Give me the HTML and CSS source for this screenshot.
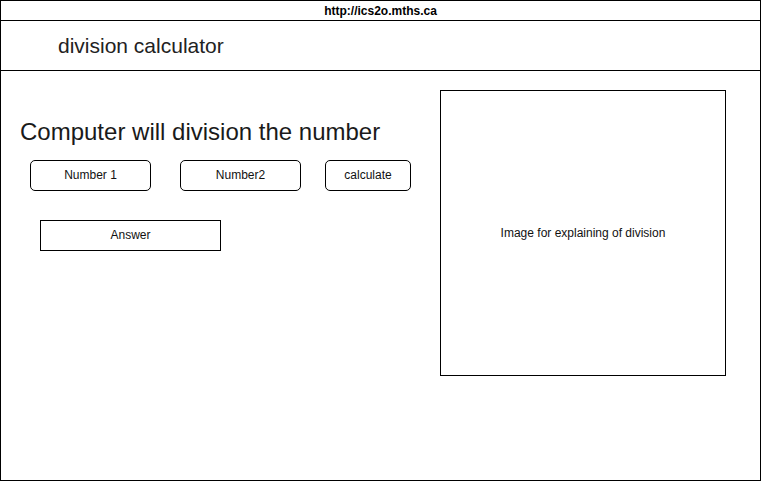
FILE: index.html
```html
<!DOCTYPE html>
<html>
<head>
<meta charset="utf-8">
<link rel="stylesheet" href="styles.css">
</head>
<body>
<div class="frame">
  <div class="urlbar">http://ics2o.mths.ca</div>
  <div class="header">division calculator</div>
  <div class="main">
    <div class="left">
      <h1 class="title">Computer will division the number</h1>
      <div class="controls">
        <div class="field field-wide field-first">Number 1</div>
        <div class="field field-wide">Number2</div>
        <div class="field field-calc">calculate</div>
      </div>
      <div class="answer">Answer</div>
    </div>
    <div class="picture">Image for explaining of division</div>
  </div>
</div>
</body>
</html>
```

FILE: styles.css
```css
* { box-sizing: border-box; }
html, body {
  margin: 0;
  padding: 0;
  background: #fff;
}
body {
  font-family: "Liberation Sans", Arial, sans-serif;
  color: #111;
}
.frame {
  width: 761px;
  height: 481px;
  border: 1px solid #000;
  display: flex;
  flex-direction: column;
}
.urlbar {
  height: 20px;
  border-bottom: 1px solid #000;
  display: flex;
  align-items: center;
  justify-content: center;
  font-size: 12px;
  font-weight: bold;
  color: #000;
}
.header {
  height: 50px;
  border-bottom: 1px solid #000;
  display: flex;
  align-items: center;
  padding-left: 57px;
  font-size: 21px;
  color: #222;
}
.main {
  flex: 1;
  display: flex;
}
.left {
  width: 439px;
  display: flex;
  flex-direction: column;
  align-items: flex-start;
}
.title {
  margin: 47px 0 0 19px;
  font-size: 24px;
  font-weight: normal;
  line-height: 28px;
  color: #1a1a1a;
}
.controls {
  display: flex;
  margin: 14px 0 0 29px;
  gap: 24px;
}
.field {
  height: 31px;
  border: 1px solid #000;
  border-radius: 5px;
  display: flex;
  align-items: center;
  justify-content: center;
  padding-bottom: 2px;
  font-size: 12px;
}
.field-wide {
  width: 121px;
}
.field-first {
  margin-right: 5px;
}
.field-calc {
  width: 86px;
}
.answer {
  margin: 29px 0 0 39px;
  width: 181px;
  height: 31px;
  border: 1px solid #000;
  display: flex;
  align-items: center;
  justify-content: center;
  padding-bottom: 2px;
  font-size: 12px;
}
.picture {
  margin-top: 19px;
  width: 286px;
  height: 286px;
  border: 1px solid #000;
  display: flex;
  align-items: center;
  justify-content: center;
  font-size: 12px;
}
```
